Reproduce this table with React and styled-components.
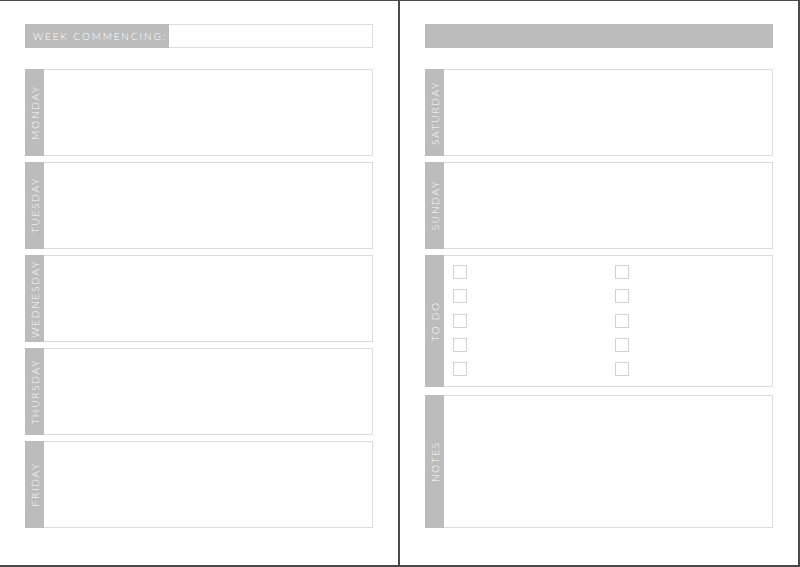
import React from "react";
import styled, { createGlobalStyle } from "styled-components";

const Global = createGlobalStyle`
  html, body { margin: 0; padding: 0; background: #fff; }
  * { box-sizing: border-box; }
`;

const Spread = styled.div`
  width: 800px;
  height: 567px;
  display: flex;
  background: #fff;
  border-top: 1px solid #4a4a4a;
  border-bottom: 2px solid #4a4a4a;
  border-right: 2px solid #4a4a4a;
  font-family: Lato, "Liberation Sans", sans-serif;
  font-weight: 300;
`;

const Page = styled.div`
  width: ${(p) => p.$w}px;
  padding: 23px 0 0 25px;
  display: flex;
  flex-direction: column;
`;

const Divider = styled.div`
  width: 2px;
  background: #4a4a4a;
`;

const Header = styled.div`
  width: 348px;
  height: 24px;
  display: flex;
  margin-bottom: 21px;
`;

const HeaderLabel = styled.div`
  flex: 0 0 ${(p) => (p.$full ? "348px" : "144px")};
  height: 100%;
  background: #bcbcbc;
  color: #fff;
  font-size: 10px;
  letter-spacing: 1.9px;
  display: flex;
  align-items: center;
  padding-left: 8px;
  white-space: nowrap;
  overflow: hidden;
`;

const HeaderField = styled.div`
  flex: 1;
  border: 1px solid #dcdcdc;
  border-left: none;
`;

const Stack = styled.div`
  display: flex;
  flex-direction: column;
  gap: ${(p) => p.$gap || 6}px;
  width: 348px;
`;

const Box = styled.div`
  display: flex;
  height: ${(p) => p.$h}px;
`;

const Label = styled.div`
  width: 19px;
  background: #bcbcbc;
  display: flex;
  align-items: center;
  justify-content: center;
`;

const LabelText = styled.span`
  writing-mode: vertical-rl;
  transform: rotate(180deg);
  color: #fff;
  font-size: 10px;
  letter-spacing: 1.8px;
  white-space: nowrap;
  line-height: 1;
`;

const Body = styled.div`
  flex: 1;
  border: 1px solid #dcdcdc;
  border-left: none;
`;

const TodoBody = styled(Body)`
  display: grid;
  grid-template-columns: 162px 14px;
  grid-auto-rows: 14px;
  row-gap: 10.25px;
  padding: 9px 0 0 9px;
  align-content: start;
`;

const Check = styled.div`
  width: 14px;
  height: 14px;
  border: 1px solid #d2d2d2;
`;

const Day = ({ name, h = 87, children }) => (
  <Box $h={h}>
    <Label>
      <LabelText>{name}</LabelText>
    </Label>
    {children || <Body />}
  </Box>
);

export default function App() {
  return (
    <>
      <Global />
      <Spread>
        <Page $w={398}>
          <Header>
            <HeaderLabel>WEEK COMMENCING:</HeaderLabel>
            <HeaderField />
          </Header>
          <Stack>
            {["MONDAY", "TUESDAY", "WEDNESDAY", "THURSDAY", "FRIDAY"].map((d) => (
              <Day key={d} name={d} />
            ))}
          </Stack>
        </Page>
        <Divider />
        <Page $w={398}>
          <Header>
            <HeaderLabel $full />
          </Header>
          <Stack>
            <Day name="SATURDAY" />
            <Day name="SUNDAY" />
          </Stack>
          <Stack $gap={8} style={{ marginTop: 6 }}>
            <Day name="TO DO" h={132}>
              <TodoBody>
                {Array.from({ length: 10 }).map((_, i) => (
                  <Check key={i} />
                ))}
              </TodoBody>
            </Day>
            <Day name="NOTES" h={133} />
          </Stack>
        </Page>
      </Spread>
    </>
  );
}
